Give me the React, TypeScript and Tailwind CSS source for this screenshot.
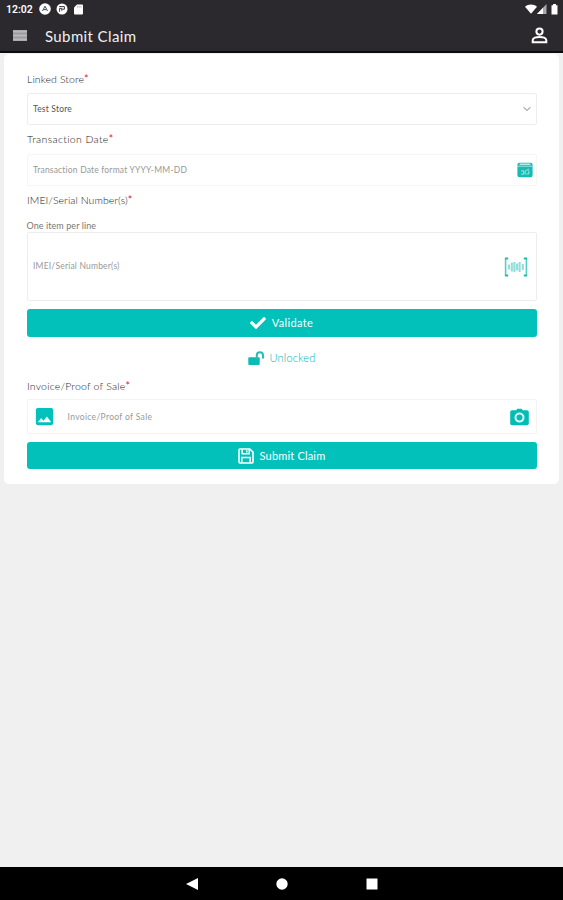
import type { ReactNode } from "react";
import { MdImage } from "react-icons/md";
import { FaCheck } from "react-icons/fa";
import { ChevronDown } from "lucide-react";

function StatusBar() {
  return (
    <div className="flex h-[18px] items-center pl-[6px] pr-[4px] text-white">
      <span className="w-[33px] pt-px font-['Roboto','Noto_Sans',sans-serif] text-[10.5px] font-semibold">12:02</span>
      <svg width="12" height="12" viewBox="0 0 12 12" className="block">
        <circle cx="6" cy="6" r="5.8" fill="#fff" />
        <path d="M3.5 8 6 3.2 8.5 8M4.7 6.6h2.6" fill="none" stroke="#4a484c" strokeWidth="1" />
      </svg>
      <svg width="12" height="12" viewBox="0 0 12 12" className="ml-[5px] block">
        <circle cx="6" cy="6" r="5.5" fill="#fff" />
        <path d="M3.2 3.6h5.2v2.6H6.2M3.6 8.8V5.4h2.2v2.4" fill="none" stroke="#3b393e" strokeWidth="1" />
      </svg>
      <svg width="9" height="11" viewBox="0 0 9 11" className="ml-[6px] block">
        <path d="M3 .5h5a1 1 0 0 1 1 1v8a1 1 0 0 1-1 1H1a1 1 0 0 1-1-1V3.5z" fill="#fff" />
        <path d="M3.5 2v1.7M5.2 2v1.7M6.9 2v1.7" stroke="#8a898c" strokeWidth=".6" />
      </svg>
      <div className="ml-auto flex items-center">
        <svg width="12" height="10" viewBox="0 0 12 10">
          <path d="M0 2.8C3.2-.4 8.8-.4 12 2.8L6 9.8z" fill="#fff" />
        </svg>
        <svg width="10" height="10" viewBox="0 0 10 10">
          <path d="M9.5 0v10H0z" fill="#a9a8ab" />
          <path d="M6 3.7V10H0z" fill="#fff" />
        </svg>
        <svg width="7" height="11" viewBox="0 0 7 11" className="ml-[4px] mr-px">
          <path d="M2 0h3v1.2h1.5V10.5H.5V1.2H2z" fill="#fff" />
        </svg>
      </div>
    </div>
  );
}

function MenuIcon() {
  return (
    <svg width="14" height="11" viewBox="0 0 14 11">
      <path d="M0 0h14v11H0z" fill="#9b9a9d" />
      <path d="M0 1.5h14M0 5.5h14M0 9.5h14" stroke="#b9b8ba" strokeWidth="1.8" />
    </svg>
  );
}

function PersonIcon() {
  return (
    <svg width="17" height="17" viewBox="0 0 17 17" fill="none" stroke="#fff" strokeWidth="2">
      <circle cx="8.5" cy="4.6" r="3.1" />
      <path d="M1.7 15.3v-2c0-2.2 3.6-3.4 6.8-3.4s6.8 1.2 6.8 3.4v2z" />
    </svg>
  );
}

function CalendarIcon() {
  return (
    <svg width="16" height="16" viewBox="0 0 16 16">
      <path d="M2.2 .8h11.6A1.9 1.9 0 0 1 15.6 2.7v1.9H.4V2.7A1.9 1.9 0 0 1 2.2 .8z" fill="#16bcb4" />
      <path d="M2.6 2.2h10.8" stroke="#e0f7f5" strokeWidth="1.2" />
      <path d="M.4 4.2h15.2" stroke="#a5e6e2" strokeWidth=".8" />
      <path d="M.4 4.7h15.2v8.6a2 2 0 0 1-2 2H2.4a2 2 0 0 1-2-2z" fill="#16bcb4" />
      <path d="M4.2 8.8h2.6v3.4H4.2M8.2 12.4V9.2M8.2 9l3.8-2M9.6 12h2.2V8.4" fill="none" stroke="#a5e6e2" strokeWidth="1" />
    </svg>
  );
}

function BarcodeIcon() {
  return (
    <svg width="24" height="20" viewBox="0 0 24 20" fill="none">
      <path d="M1.6 1v18M22.4 1v18" stroke="#5ccdc6" strokeWidth="1.6" />
      <path d="M1 1.6h3.2M1 18.4h3.2M19.8 1.6H23M19.8 18.4H23" stroke="#1dbcb3" strokeWidth="2" />
      <path d="M5 7.5v5M7.8 5.5v9M10.4 5v10M13 6.5v7M15.6 5v10M18.8 7v6" stroke="#93ded9" strokeWidth="2.1" />
    </svg>
  );
}

function UnlockIcon() {
  return (
    <svg width="17" height="15" viewBox="0 0 17 15">
      <rect x="0.3" y="6.3" width="11.4" height="7.7" rx="1" fill="#09bdb5" />
      <path d="M8.8 7V4.4a3.1 3.1 0 0 1 6.2 0v2.3" fill="none" stroke="#25beb6" strokeWidth="2" strokeLinecap="round" />
    </svg>
  );
}

function CameraIcon() {
  return (
    <svg width="19" height="18" viewBox="0 0 19 18">
      <path d="M6.2 2.2 7.4.8h4.2l1.2 1.4H17a1.8 1.8 0 0 1 1.8 1.8v11.4a1.8 1.8 0 0 1-1.8 1.8H2a1.8 1.8 0 0 1-1.8-1.8V4A1.8 1.8 0 0 1 2 2.2z" fill="#02bdb5" />
      <circle cx="9.5" cy="9.6" r="4" fill="none" stroke="#e2f8f6" strokeWidth="2" />
    </svg>
  );
}

function SaveIcon() {
  return (
    <svg width="16" height="16" viewBox="0 0 16 16" fill="none" stroke="#fff" strokeWidth="1.6">
      <path d="M2 1h9.8L15 4.2V14a1 1 0 0 1-1 1H2a1 1 0 0 1-1-1V2a1 1 0 0 1 1-1z" />
      <path d="M4.2 1.2v4.6h7V1.2M8.8 2.2v2.4M3.8 14.8V9.4h8.4v5.4" strokeWidth="1.5" />
    </svg>
  );
}

function Label({ children, className }: { children: string; className: string }) {
  return (
    <label className={`flex items-center pl-[0.5px] pt-px text-[10.5px] font-light text-[#222] ${className}`}>
      {children}
      <span className="font-normal text-[#e0203c]">*</span>
    </label>
  );
}

function ActionButton({ icon, children, className }: { icon: ReactNode; children: ReactNode; className: string }) {
  return (
    <button className={`flex w-full items-center justify-center rounded-[3px] bg-[#02c1bb] text-[11px] text-white ${className}`}>
      {icon}
      {children}
    </button>
  );
}

export default function App() {
  return (
    <div className="flex h-[900px] w-full flex-col overflow-hidden bg-[#f0f0f0] font-['Lato','Noto_Sans',sans-serif]">
      <header className="h-[53px] shrink-0 border-b-2 border-[#0c0b0d] bg-[#2b292e]">
        <StatusBar />
        <div className="flex h-[35px] items-center pl-[13px] pr-[15px]">
          <MenuIcon />
          <h1 className="ml-[18px] pt-px text-[15px] tracking-[0.38px] text-[#f0f0f0]">Submit Claim</h1>
          <span className="ml-auto"><PersonIcon /></span>
        </div>
      </header>

      <main className="mx-1 mt-px h-[430px] shrink-0 rounded-[5px] bg-white pl-[22.5px] pr-[22.5px] pt-[11px]">
        <Label className="h-7 tracking-[0.1px]">Linked Store</Label>
        <div className="flex h-8 items-center justify-between rounded-[2px] border border-[#ededed] pl-[5.5px] pr-[3px]">
          <span className="text-[8.5px] tracking-[0.2px] text-[#555]">Test Store</span>
          <ChevronDown size={12} strokeWidth={2} className="text-[#777]" />
        </div>

        <Label className="h-[29px] tracking-[0.35px]">Transaction Date</Label>
        <div className="flex h-8 items-center justify-between rounded-[2px] border border-[#f6f6f6] pl-[5.5px] pr-[3px]">
          <span className="text-[8.5px] tracking-[0.19px] text-[#999]">Transaction Date format YYYY-MM-DD</span>
          <CalendarIcon />
        </div>

        <Label className="h-7 tracking-[0.06px]">IMEI/Serial Number(s)</Label>
        <p className="flex h-[18px] items-end text-[9px] leading-[13px] tracking-[0.08px] text-[#777]">One item per line</p>
        <div className="flex h-[69px] items-center justify-between rounded-[2px] border border-[#ededed] pl-[5.5px] pr-[8px]">
          <span className="text-[8.5px] tracking-[0.2px] text-[#999]">IMEI/Serial Number(s)</span>
          <BarcodeIcon />
        </div>

        <ActionButton className="mt-2 h-7 tracking-[0.35px]" icon={<FaCheck size={16} className="mr-[6px]" />}>
          Validate
        </ActionButton>
        <div className="flex h-[42px] items-center justify-center text-[11px] font-light tracking-[0.2px] text-[#02b5af]">
          <span className="mr-[5px]"><UnlockIcon /></span>
          Unlocked
        </div>

        <Label className="h-5 pb-[5px] tracking-[0.2px]">Invoice/Proof of Sale</Label>
        <div className="flex h-[35px] items-center rounded-[2px] border border-[#f3f3f3] pl-[5px] pr-[7px]">
          <MdImage size={23} className="text-[#02c1bb]" />
          <span className="ml-3 pt-[2px] text-[8.5px] tracking-[0.33px] text-[#999]">Invoice/Proof of Sale</span>
          <span className="ml-auto"><CameraIcon /></span>
        </div>
        <ActionButton className="mt-2 h-[27px] tracking-[0.18px]" icon={<span className="mr-[6px]"><SaveIcon /></span>}>
          <span className="pt-px">Submit Claim</span>
        </ActionButton>
      </main>

      <nav className="mt-auto flex h-[33px] shrink-0 items-center justify-center gap-[78px] bg-black">
        <svg width="12" height="12" viewBox="0 0 12 12"><path d="M12 0v12L0 6z" fill="#fff" /></svg>
        <svg width="12" height="12" viewBox="0 0 12 12"><circle cx="6" cy="6" r="5.7" fill="#fff" /></svg>
        <svg width="12" height="12" viewBox="0 0 12 12"><path d="M.5.5h11v11H.5z" fill="#fff" /></svg>
      </nav>
    </div>
  );
}
